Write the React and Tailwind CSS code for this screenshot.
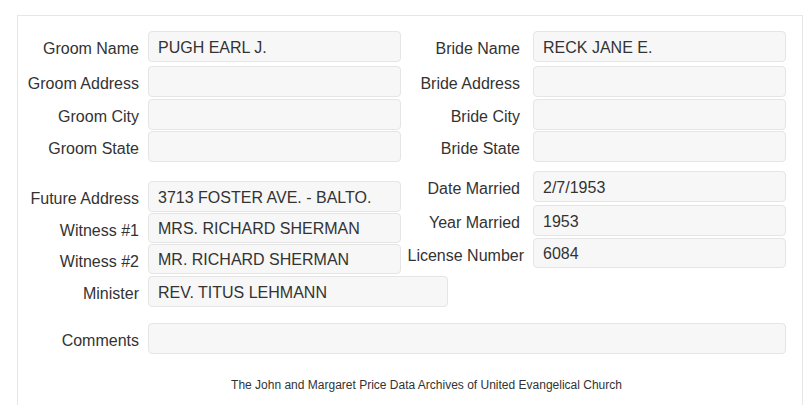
import React from "react";

const font = { fontFamily: '"Liberation Sans", Arial, sans-serif' };

function Field({ label, value, h = "h-[31px]", mt = "", labelW = "w-[121px]", gap = "gap-[9px]", inputW = "w-[253px]" }) {
  return (
    <div className={`flex items-center ${gap} ${mt}`}>
      <div className={`${labelW} shrink-0 text-right whitespace-nowrap pt-[5px]`}>{label}</div>
      <div className={`${inputW} ${h} shrink-0 flex items-center pt-[2px] px-[9px] bg-[#f7f7f7] border border-[#e5e5e5] rounded-[4px] whitespace-nowrap`}>
        {value}
      </div>
    </div>
  );
}

export default function App() {
  return (
    <div className="w-[805px] h-[405px] overflow-hidden bg-white text-[16px] text-[#333]" style={font}>
      <div className="ml-[17px] mt-[15px] w-[786px] h-[420px] border border-[#e6e6e6] pt-[15px]">
        <div className="flex">
          <div className="w-[383px] shrink-0">
            <Field label="Groom Name" value="PUGH EARL J." />
            <Field label="Groom Address" value="" mt="mt-[4px]" />
            <Field label="Groom City" value="" mt="mt-[2px]" />
            <Field label="Groom State" value="" mt="mt-[1px]" />
            <Field label="Future Address" value="3713 FOSTER AVE. - BALTO." mt="mt-[19px]" />
            <Field label="Witness #1" value="MRS. RICHARD SHERMAN" h="h-[30px]" mt="mt-[1px]" />
            <Field label="Witness #2" value="MR. RICHARD SHERMAN" h="h-[30px]" mt="mt-[1px]" />
          </div>
          <div className="w-[385px] shrink-0">
            <Field label="Bride Name" value="RECK JANE E." labelW="w-[119px]" gap="gap-[13px]" />
            <Field label="Bride Address" value="" mt="mt-[4px]" labelW="w-[119px]" gap="gap-[13px]" />
            <Field label="Bride City" value="" mt="mt-[2px]" labelW="w-[119px]" gap="gap-[13px]" />
            <Field label="Bride State" value="" mt="mt-[1px]" labelW="w-[119px]" gap="gap-[13px]" />
            <Field label="Date Married" value="2/7/1953" mt="mt-[9px]" labelW="w-[119px]" gap="gap-[13px]" />
            <Field label="Year Married" value="1953" mt="mt-[3px]" labelW="w-[119px]" gap="gap-[13px]" />
            <Field label="License Number" value="6084" h="h-[30px]" mt="mt-[2px]" labelW="w-[123px]" gap="gap-[9px]" />
          </div>
        </div>
        <Field label="Minister" value="REV. TITUS LEHMANN" mt="mt-[2px]" inputW="w-[300px]" />
        <Field label="Comments" value="" mt="mt-[16px]" inputW="w-[638px]" />
        <div className="mt-[24px] pl-[33px] text-center text-[12px] leading-[14px]">
          The John and Margaret Price Data Archives of United Evangelical Church
        </div>
      </div>
    </div>
  );
}
